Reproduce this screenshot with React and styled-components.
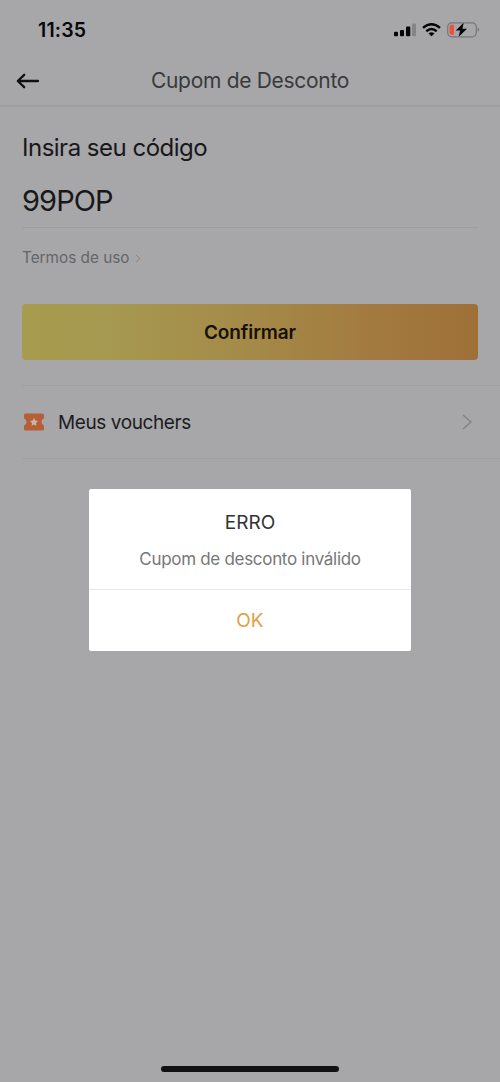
import React from "react";
import styled, { createGlobalStyle } from "styled-components";

const GlobalStyle = createGlobalStyle`
  *, *::before, *::after { box-sizing: border-box; }
  body { margin: 0; background: #a7a7a9; font-family: Inter, "Liberation Sans", sans-serif; }
  button { font-family: inherit; border: 0; padding: 0; background: none; }
  svg { display: block; flex: none; }
`;

const Screen = styled.div`
  position: relative;
  display: flex;
  flex-direction: column;
  width: 500px;
  height: 1082px;
  overflow: hidden;
  background: #a7a7a9;
`;

const Text = styled.span`
  display: block;
  white-space: nowrap;
  font-size: ${(p) => p.$size}px;
  line-height: ${(p) => p.$line}px;
  font-weight: ${(p) => p.$weight || 400};
  letter-spacing: ${(p) => p.$track || 0}px;
  color: ${(p) => p.$color || "#18181b"};
`;

const StatusBar = styled.div`
  display: flex;
  justify-content: space-between;
  align-items: center;
  height: 60px;
  padding: 0 20px 0 38px;
`;

const StatusIcons = styled.div`
  display: flex;
  align-items: center;
  gap: 6px;
`;

const NavBar = styled.header`
  display: grid;
  grid-template-columns: 56px 1fr 56px;
  align-items: center;
  height: 47px;
  padding-bottom: 3px;
  border-bottom: 2px solid #9d9d9f;
`;

const BackButton = styled.button`
  padding-left: 16px;
`;

const NavTitle = styled.div`
  display: flex;
  justify-content: center;
`;

const Form = styled.main`
  display: flex;
  flex-direction: column;
  padding: 25px 22px 0;
`;

const CodeField = styled.div`
  height: 64px;
  padding-top: 20px;
  border-bottom: 1px solid #9e9ea1;
`;

const Terms = styled.div`
  display: flex;
  align-items: center;
  gap: 6px;
  height: 20px;
  margin-top: 20px;
`;

const ConfirmButton = styled.button`
  display: flex;
  align-items: center;
  justify-content: center;
  height: 56px;
  margin-top: 36px;
  padding-top: 1px;
  border-radius: 4px;
  background: linear-gradient(90deg, #a69b4e 0%, #a69951 18%, #a48b49 48%, #a37b40 75%, #9e7038 100%);
`;

const VoucherRow = styled.div`
  display: flex;
  align-items: center;
  height: 74px;
  margin: 25px 0 0 22px;
  padding: 0 28px 0 2px;
  border-top: 1px solid #a0a0a3;
  border-bottom: 1px solid #a0a0a3;
`;

const VoucherLabel = styled.div`
  flex: 1;
  padding: 1px 0 0 14px;
`;

const Dialog = styled.div`
  position: absolute;
  left: 89px;
  top: 489px;
  width: 322px;
  height: 162px;
  display: flex;
  flex-direction: column;
  border-radius: 2px;
  background: #fff;
`;

const DialogBody = styled.div`
  display: flex;
  flex-direction: column;
  align-items: center;
  height: 101px;
  padding-top: 21px;
  gap: 12px;
  border-bottom: 1px solid #e8e8e8;
`;

const DialogAction = styled.button`
  display: flex;
  flex: 1;
  align-items: center;
  justify-content: center;
  padding-top: 1px;
`;

const HomeIndicator = styled.div`
  width: 178px;
  height: 6px;
  margin: auto auto 10px;
  border-radius: 3px;
  background: #111114;
`;

const Signal = () => (
  <svg width="22" height="14" viewBox="0 0 22 14">
    <rect x="0" y="8.8" width="4" height="4.5" rx="1" fill="#050507" />
    <rect x="6" y="7" width="4" height="6.3" rx="1" fill="#050507" />
    <rect x="12" y="3.5" width="4.3" height="9.8" rx="1" fill="#050507" />
    <rect x="18" y=".5" width="4" height="12.8" rx="1" fill="#858588" />
  </svg>
);

const Wifi = () => (
  <svg width="19" height="14" viewBox="0 0 19 14">
    <g fill="none" stroke="#050507" strokeWidth="2.5">
      <path d="M1 4.9Q9.5 -2.3 18 4.9" />
      <path d="M4.3 8.3Q9.5 3.8 14.7 8.3" />
    </g>
    <path d="M6.5 10.4Q9.5 8 12.5 10.4L9.5 13.2Z" fill="#050507" />
  </svg>
);

const Battery = () => (
  <svg width="33" height="16" viewBox="0 0 33 16">
    <rect x=".7" y=".8" width="28.6" height="14" rx="4" fill="none" stroke="#77777a" strokeWidth="1.2" />
    <path d="M4.5 2.8H7V12.8H4.5Q2.5 12.8 2.5 10.8V4.8Q2.5 2.8 4.5 2.8Z" fill="#ed513f" />
    <path d="M30.7 5.8Q32.3 6.5 32.3 7.8T30.7 9.8Z" fill="#77777a" />
    <path d="M16.8 .5L8.8 8.6H13.2L11.5 15.1L20 6.8H15.4Z" fill="#050507" stroke="#a7a7a9" strokeWidth="1" paintOrder="stroke" />
  </svg>
);

const BackArrow = () => (
  <svg width="24" height="16" viewBox="0 0 24 16" fill="none" stroke="#111114" strokeWidth="2.3" strokeLinecap="round" strokeLinejoin="round">
    <path d="M8.2 1.8L1.8 8L8.2 14.2M2 8H22" />
  </svg>
);

const Chevron = ({ width, height, color, stroke }) => (
  <svg width={width} height={height} viewBox={`0 0 ${width} ${height}`} fill="none" stroke={color} strokeWidth={stroke}>
    <path d={`M1 1L${width - 1} ${height / 2}L1 ${height - 1}`} />
  </svg>
);

const Ticket = () => (
  <svg width="20" height="18" viewBox="0 0 20 18">
    <path d="M1.5 .5H18.5Q20 .5 20 2V5.3Q17.5 6.2 17.5 9T20 12.7V16Q20 17.5 18.5 17.5H1.5Q0 17.5 0 16V12.7Q2.5 11.8 2.5 9T0 5.3V2Q0 .5 1.5 .5Z" fill="#b65f36" />
    <path d="M10 5L11.3 7.6L14 8L12 9.9L12.5 12.8L10 11.4L7.5 12.8L8 9.9L6 8L8.7 7.6Z" fill="#c5b5ad" />
  </svg>
);

export default function App() {
  return (
    <>
      <GlobalStyle />
      <Screen>
        <StatusBar>
          <Text $size={19.5} $line={24} $weight={600} $track={0.15} $color="#08080a">11:35</Text>
          <StatusIcons><Signal /><Wifi /><Battery /></StatusIcons>
        </StatusBar>
        <NavBar>
          <BackButton aria-label="Voltar"><BackArrow /></BackButton>
          <NavTitle><Text $size={21} $line={26} $track={-0.3} $color="#39393c">Cupom de Desconto</Text></NavTitle>
        </NavBar>
        <Form>
          <Text $size={24} $line={32} $track={-0.5}>Insira seu código</Text>
          <CodeField><Text $size={29} $line={34} $track={-0.9}>99POP</Text></CodeField>
          <Terms>
            <Text $size={15.3} $line={20} $color="#656568">Termos de uso</Text>
            <Chevron width={6} height={9} color="#858588" stroke={1} />
          </Terms>
          <ConfirmButton><Text $size={19} $line={24} $weight={600} $track={-0.1} $color="#171006">Confirmar</Text></ConfirmButton>
        </Form>
        <VoucherRow>
          <Ticket />
          <VoucherLabel><Text $size={19} $line={24} $track={-0.4} $color="#1c1c1f">Meus vouchers</Text></VoucherLabel>
          <Chevron width={10} height={16} color="#828285" stroke={1.4} />
        </VoucherRow>
        <HomeIndicator />
        <Dialog role="alertdialog">
          <DialogBody>
            <Text $size={19} $line={26} $color="#333">ERRO</Text>
            <Text $size={17} $line={22} $track={-0.3} $color="#777">Cupom de desconto inválido</Text>
          </DialogBody>
          <DialogAction><Text $size={19} $line={24} $color="#e3a044">OK</Text></DialogAction>
        </Dialog>
      </Screen>
    </>
  );
}
